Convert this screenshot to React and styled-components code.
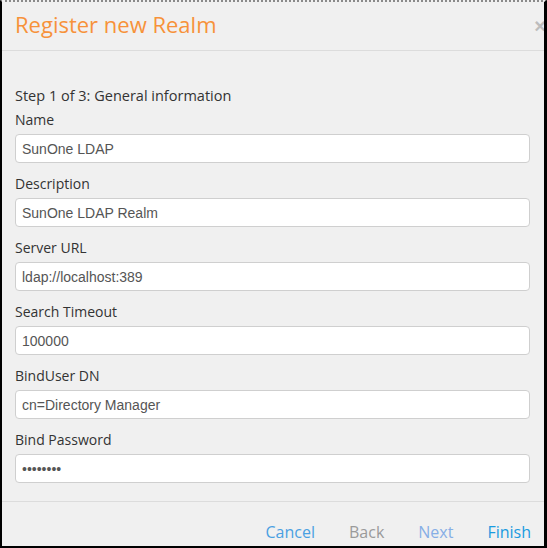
import React from "react";
import styled, { createGlobalStyle } from "styled-components";

const Global = createGlobalStyle`
  html, body { margin: 0; padding: 0; background: #fff; }
  * { box-sizing: border-box; }
`;

const Frame = styled.div`
  width: 547px;
  height: 548px;
  background: #f0f0f0;
  border-left: 2px solid #000;
  border-right: 3px solid #000;
  border-bottom: 2px solid #000;
  border-top: 2px dotted #8a8a8a;
  display: flex;
  flex-direction: column;
  overflow: hidden;
  font-family: "Open Sans", "Liberation Sans", sans-serif;
`;

const Header = styled.div`
  height: 49px;
  flex: none;
  display: flex;
  align-items: flex-start;
  padding-left: 13px;
  border-bottom: 1px solid #dcdcdc;
`;

const Title = styled.h4`
  margin: 0;
  padding-top: 6px;
  font-weight: 400;
  font-size: 22px;
  line-height: 32px;
  color: #f7923a;
`;

const Close = styled.span`
  margin-left: auto;
  margin-right: -2px;
  padding-top: 12px;
  font-family: "Liberation Sans", sans-serif;
  font-size: 20px;
  font-weight: 700;
  line-height: 24px;
  color: #bdbdbd;
`;

const Body = styled.div`
  flex: 1;
  padding: 35px 14px 0 13px;
  border-bottom: 1px solid #dcdcdc;
  display: flex;
  flex-direction: column;
`;

const Step = styled.div`
  font-size: 14.5px;
  line-height: 20px;
  color: #333;
  margin-bottom: 4px;
`;

const Field = styled.div`
  display: flex;
  flex-direction: column;
  margin-bottom: 11px;
`;

const Label = styled.label`
  font-size: 14px;
  line-height: 20px;
  color: #333;
  margin-bottom: 4px;
`;

const Input = styled.input`
  height: 29px;
  width: 100%;
  padding: 0 6px;
  border: 1px solid #cfcfcf;
  border-radius: 4px;
  background: #fff;
  font-family: "Liberation Sans", Arial, sans-serif;
  font-size: 14px;
  color: #555;
  outline: none;
`;

const Footer = styled.div`
  height: 44px;
  flex: none;
  display: flex;
  justify-content: flex-end;
  align-items: flex-end;
  gap: 34px;
  padding: 0 13px 2px 0;
`;

const Btn = styled.button`
  background: none;
  border: none;
  padding: 0;
  font-family: "Open Sans", sans-serif;
  font-size: 16px;
  line-height: 24px;
  color: ${(p) => p.$color};
  cursor: pointer;
`;

const fields = [
  ["Name", "SunOne LDAP", "text"],
  ["Description", "SunOne LDAP Realm", "text"],
  ["Server URL", "ldap://localhost:389", "text"],
  ["Search Timeout", "100000", "text"],
  ["BindUser DN", "cn=Directory Manager", "text"],
  ["Bind Password", "password", "password"],
];

export default function App() {
  return (
    <>
      <Global />
      <Frame>
        <Header>
          <Title>Register new Realm</Title>
          <Close>×</Close>
        </Header>
        <Body>
          <Step>Step 1 of 3: General information</Step>
          {fields.map(([label, value, type]) => (
            <Field key={label}>
              <Label>{label}</Label>
              <Input type={type} value={value} readOnly />
            </Field>
          ))}
        </Body>
        <Footer>
          <Btn $color="#4aa0e2">Cancel</Btn>
          <Btn $color="#9a9a9a">Back</Btn>
          <Btn $color="#86aee6">Next</Btn>
          <Btn $color="#1a9be0">Finish</Btn>
        </Footer>
      </Frame>
    </>
  );
}
